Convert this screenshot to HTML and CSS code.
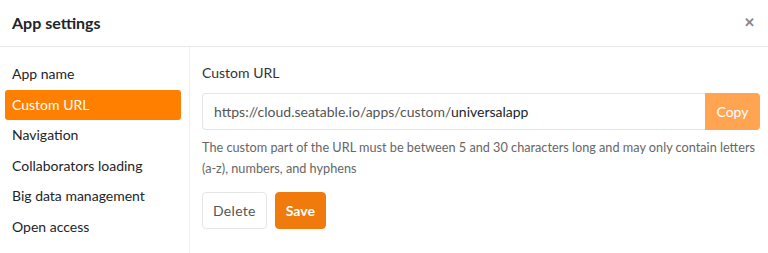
FILE: index.html
```
<!DOCTYPE html>
<html>
<head>
  <meta name="viewport" content="width=device-width, initial-scale=1">
  <title>App settings</title>
  <link rel="stylesheet" href="styles.css">
</head>
<body>
  <div id="dialog">
    <div id="header">
      <div id="title">App settings</div>
      <span id="close">&#x2715;</span>
    </div>
    <div id="content">
      <div id="sidebar">
        <div class="nav-item">App name</div>
        <div class="nav-item active">Custom URL</div>
        <div class="nav-item">Navigation</div>
        <div class="nav-item">Collaborators loading</div>
        <div class="nav-item">Big data management</div>
        <div class="nav-item">Open access</div>
      </div>
      <div id="main">
        <div class="label">Custom URL</div>
        <div class="url-group">
          <div class="url-input"><span class="prefix">https://cloud.seatable.io/apps/custom/</span>universalapp</div>
          <button class="copy-button">Copy</button>
        </div>
        <div class="tip">The custom part of the URL must be between 5 and 30 characters long and may only contain letters (a-z), numbers, and hyphens</div>
        <div class="actions">
          <button class="btn btn-default">Delete</button>
          <button class="btn btn-primary">Save</button>
        </div>
      </div>
    </div>
  </div>
</body>
</html>
```

FILE: styles.css
```
html, body {
  margin: 0;
  background-color: #fff;
  font-family: "Lato", "Open Sans", sans-serif;
  color: #212529;
}

#dialog {
  width: 768px;
  height: 253px;
  overflow: hidden;
}

#header {
  height: 47px;
  box-sizing: border-box;
  border-bottom: 1px solid #e9e9e9;
  display: flex;
  align-items: center;
  justify-content: space-between;
  padding: 0 13px 2px 12px;
}

#title {
  font-size: 16px;
  font-weight: 700;
  color: #212529;
}

#close {
  font-size: 13px;
  font-weight: 700;
  color: #888;
}

#content {
  display: flex;
  height: 206px;
}

#sidebar {
  width: 190px;
  box-sizing: border-box;
  border-right: 1px solid #f0f0f0;
  padding: 12px 8px 0 5px;
}

.nav-item {
  height: 30.6px;
  line-height: 30px;
  font-size: 14px;
  padding-left: 7px;
  border-radius: 3px;
  color: #212529;
}

.nav-item.active {
  height: 30px;
  margin-bottom: 0.6px;
  background-color: #ff8000;
  color: #fff;
}

#main {
  flex: 1;
  padding: 17px 8px 0 12px;
}

.label {
  font-size: 14px;
  color: #333;
  margin-bottom: 12px;
}

.url-group {
  display: flex;
  height: 37px;
}

.url-input {
  flex: 1;
  box-sizing: border-box;
  border: 1px solid #e5e5e5;
  border-right: none;
  border-radius: 4px 0 0 4px;
  padding: 0 11px;
  line-height: 35px;
  font-size: 14px;
  color: #212529;
}

.prefix {
  color: #555;
}

.copy-button {
  width: 55px;
  border: none;
  border-radius: 0 4px 4px 0;
  background-color: #ffa552;
  color: #fff;
  font-family: inherit;
  font-size: 14px;
  padding: 0;
}

.tip {
  font-size: 12.7px;
  color: #666;
  line-height: 21px;
  margin-top: 7px;
  margin-right: -4px;
}

.actions {
  display: flex;
  gap: 8px;
  margin-top: 13px;
}

.btn {
  height: 37px;
  border-radius: 4px;
  font-family: inherit;
  font-size: 14px;
  padding: 0 10px;
}

.btn-default {
  background-color: #fff;
  border: 1px solid #e5e5e5;
  color: #555;
  letter-spacing: 0.3px;
}

.btn-primary {
  background-color: #f07a0c;
  border: 1px solid #f07a0c;
  color: #fff;
  font-weight: 700;
}
```
